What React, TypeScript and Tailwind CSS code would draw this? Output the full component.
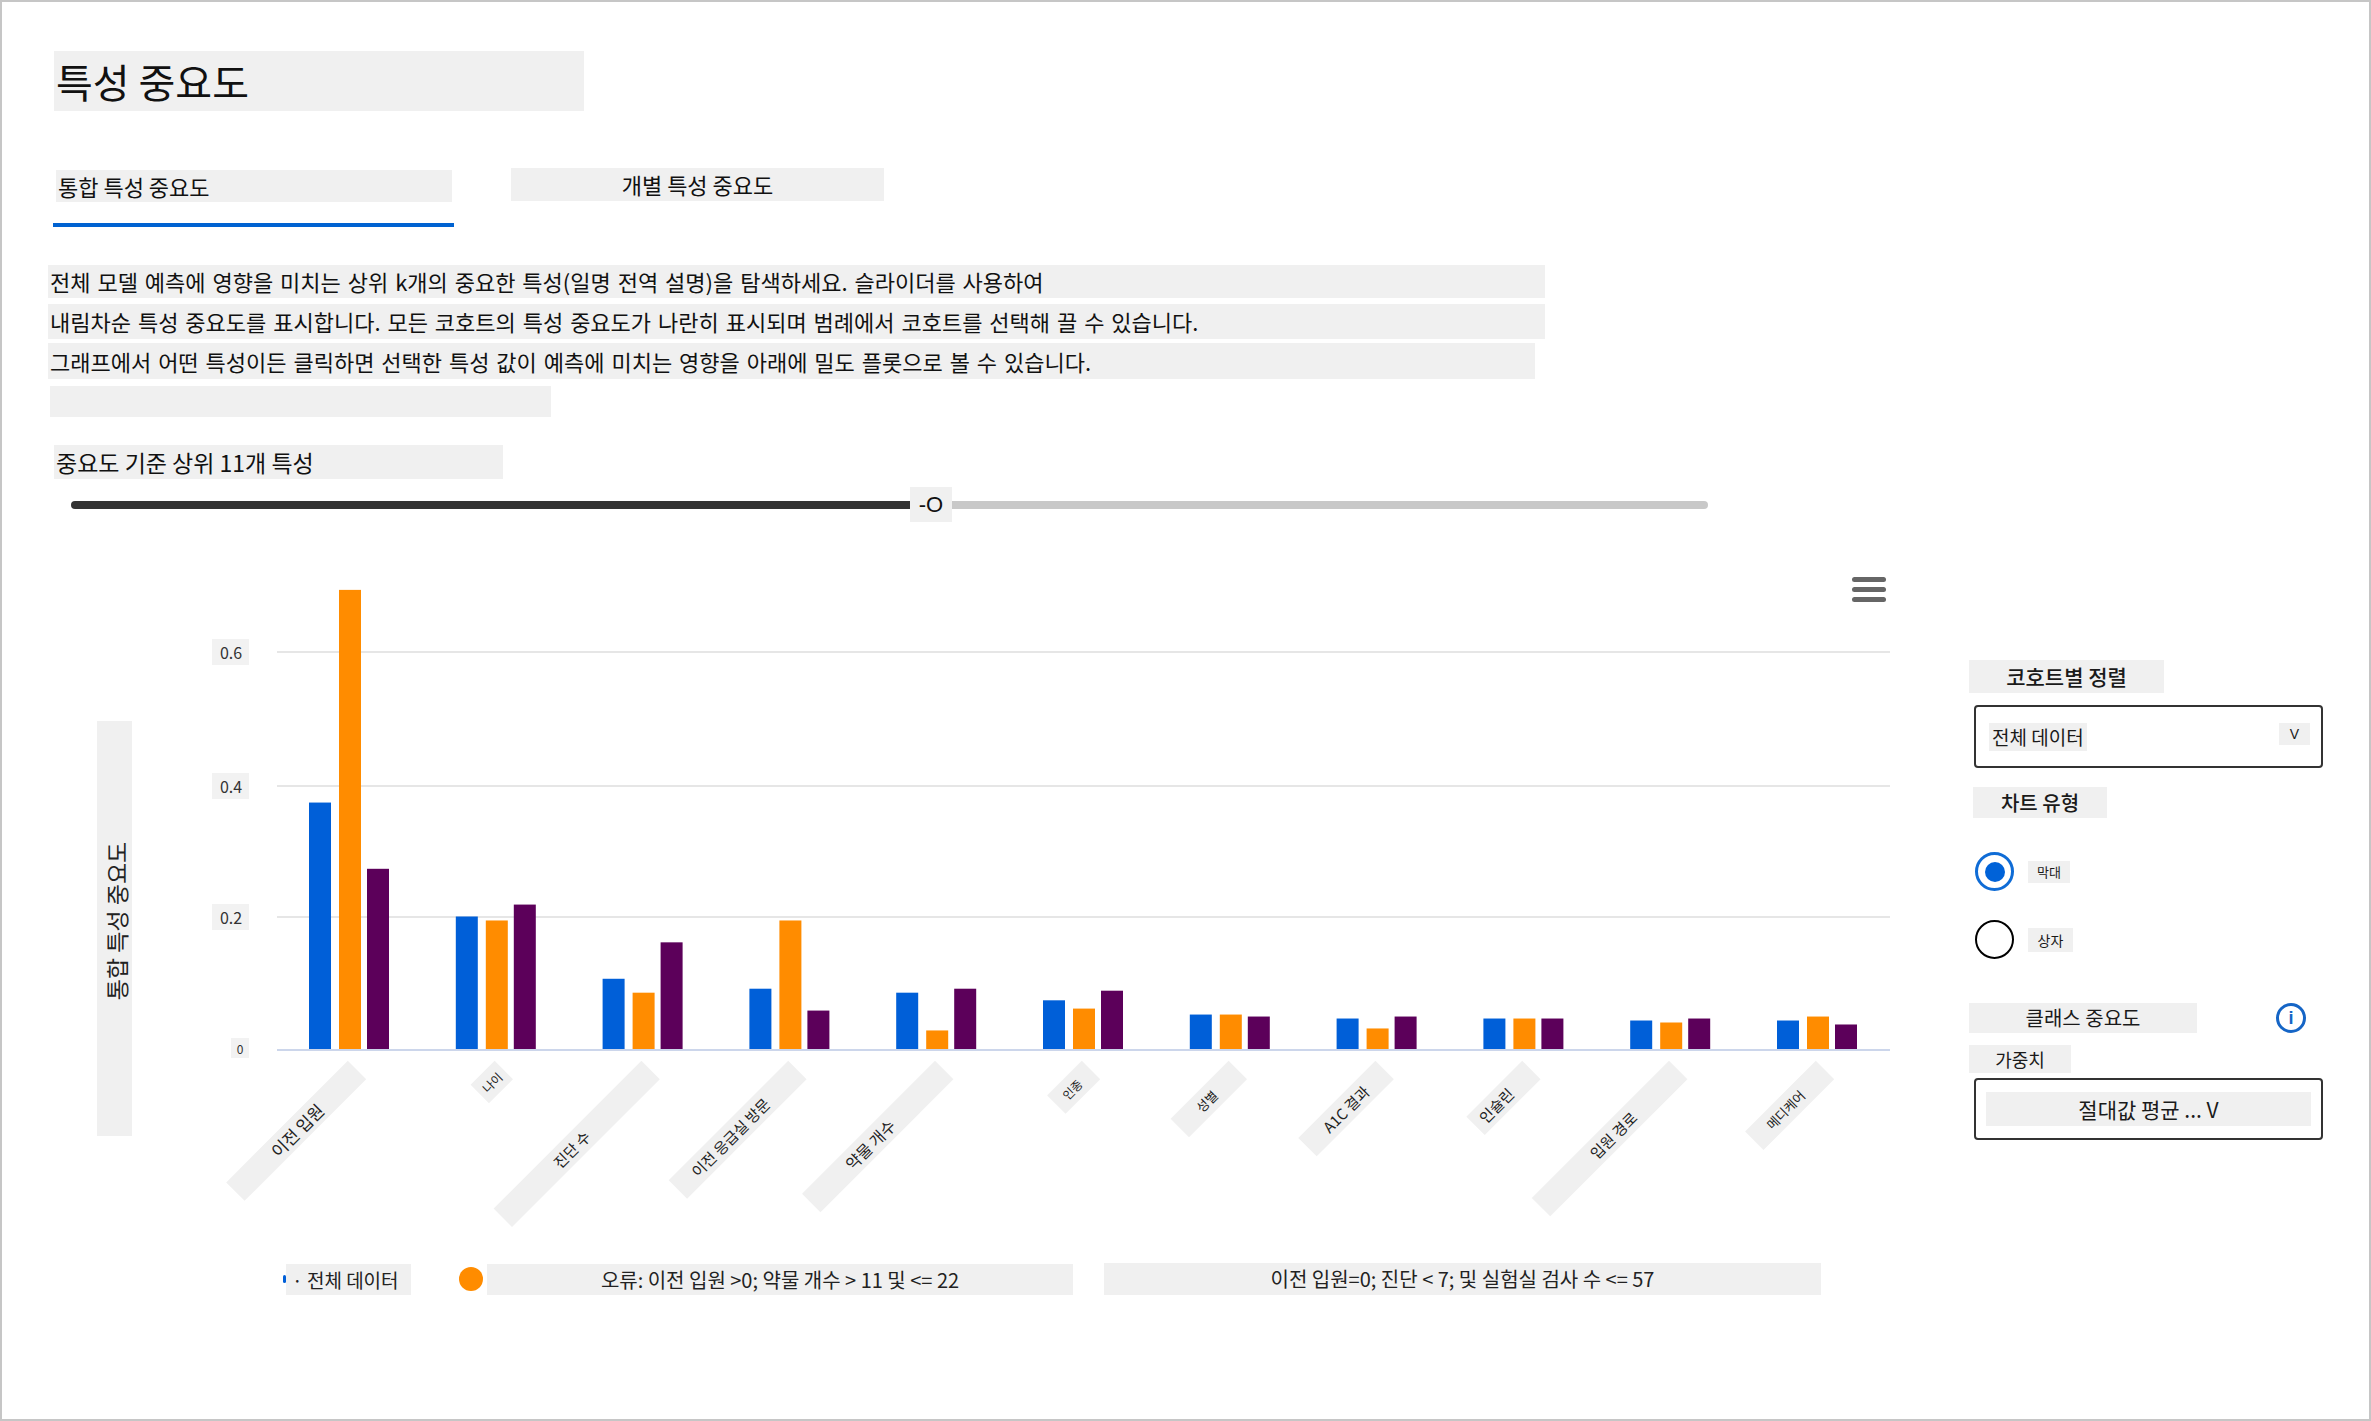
import React from 'react'

const GRAY = 'bg-[#f0f0f0]'

type Feature = {
  name: string
  values: [number, number, number]
  len: number
  textAt: number
  size: number
}

const features: Feature[] = [
  { name: '이전 입원', values: [0.372, 0.693, 0.272], len: 172, textAt: 85, size: 17 },
  { name: '나이', values: [0.2, 0.194, 0.218], len: 34, textAt: 17, size: 12 },
  { name: '진단 수', values: [0.106, 0.085, 0.161], len: 209, textAt: 112, size: 15 },
  { name: '이전 응급실 방문', values: [0.091, 0.194, 0.058], len: 169, textAt: 95, size: 15 },
  { name: '약물 개수', values: [0.085, 0.028, 0.091], len: 188, textAt: 105, size: 16 },
  { name: '인종', values: [0.0735, 0.061, 0.088], len: 49, textAt: 27, size: 12 },
  { name: '성별', values: [0.052, 0.052, 0.049], len: 82, textAt: 44, size: 13 },
  { name: 'A1C 결과', values: [0.046, 0.031, 0.049], len: 109, textAt: 55, size: 15 },
  { name: '인슐린', values: [0.046, 0.046, 0.046], len: 79, textAt: 50, size: 15 },
  { name: '입원 경로', values: [0.043, 0.04, 0.046], len: 194, textAt: 92, size: 15 },
  { name: '메디케어', values: [0.043, 0.049, 0.037], len: 100, textAt: 56, size: 13 },
]

const COLORS = ['#005fd8', '#ff8c00', '#5c005a']
const BASE_Y = 1049
const PER_UNIT = 662.5

const ticks = [
  { label: '0.6', y: 652 },
  { label: '0.4', y: 786 },
  { label: '0.2', y: 917 },
]

function FeatureChart() {
  return (
    <svg width={1921} height={741} viewBox="48 522 1921 741" className="block">
      {/* menu */}
      <rect x={1852} y={577} width={34} height={5} rx={2.5} fill="#666" />
      <rect x={1852} y={587} width={34} height={5} rx={2.5} fill="#666" />
      <rect x={1852} y={597} width={34} height={5} rx={2.5} fill="#666" />

      {/* y axis title */}
      <rect x={97} y={721} width={35} height={415} fill="#f0f0f0" />
      <text
        x={0}
        y={0}
        transform="translate(116 921) rotate(-90)"
        textAnchor="middle"
        dominantBaseline="central"
        fontSize={23}
        fill="#222"
      >
        통합 특성 중요도
      </text>

      {ticks.map((t) => (
        <g key={t.label}>
          <line x1={277} x2={1890} y1={t.y} y2={t.y} stroke="#e6e6e6" strokeWidth={2} />
          <rect x={212} y={t.y - 13} width={37} height={26} fill="#f2f2f2" />
          <text x={231} y={t.y} textAnchor="middle" dominantBaseline="central" fontSize={16} fill="#333">
            {t.label}
          </text>
        </g>
      ))}
      <rect x={231} y={1038} width={18} height={20} fill="#f2f2f2" />
      <text x={240} y={1048} textAnchor="middle" dominantBaseline="central" fontSize={12} fill="#333">
        0
      </text>

      {features.map((f, i) => {
        const cx = 349 + i * 146.8
        const offsets = [-40, -10, 18]
        return (
          <g key={f.name}>
            {f.values.map((v, j) => {
              const h = v * PER_UNIT
              return (
                <rect
                  key={j}
                  x={cx + offsets[j]}
                  y={BASE_Y - h}
                  width={22}
                  height={h}
                  fill={COLORS[j]}
                />
              )
            })}
            <g transform={`translate(${cx + 8} 1070) rotate(-45)`}>
              <rect x={-f.len} y={-13} width={f.len} height={26} fill="#f0f0f0" />
              <text
                x={-f.textAt}
                y={0}
                textAnchor="middle"
                dominantBaseline="central"
                fontSize={f.size}
                fill="#222"
              >
                {f.name}
              </text>
            </g>
          </g>
        )
      })}

      <line x1={277} x2={1890} y1={1050} y2={1050} stroke="#ccd6eb" strokeWidth={2} />
    </svg>
  )
}

function Legend() {
  return (
    <div className="flex h-[32px] items-center pl-[235px] text-[20px] text-[#222]">
      <div className="h-[8px] w-[3px] rounded-full bg-[#005fd8]" />
      <div className={`h-[31px] w-[125px] ${GRAY} pl-[6px] text-[19px] leading-[31px]`}>· 전체 데이터</div>
      <div className="ml-[48px] h-[24px] w-[24px] rounded-full bg-[#ff8c00]" />
      <div className={`ml-[4px] h-[31px] w-[586px] ${GRAY} text-center leading-[31px]`}>
        오류: 이전 입원 &gt;0; 약물 개수 &gt; 11 및 &lt;= 22
      </div>
      <div className={`ml-[31px] h-[32px] w-[717px] ${GRAY} text-center leading-[32px]`}>
        이전 입원=0; 진단 &lt; 7; 및 실험실 검사 수 &lt;= 57
      </div>
    </div>
  )
}

function SidePanel() {
  return (
    <div className="mt-[138px] flex w-[354px] flex-col items-start text-[#1a1a1a]">
      <div className={`h-[33px] w-[195px] ${GRAY} text-center text-[21px] font-medium leading-[33px]`}>
        코호트별 정렬
      </div>
      <div className="ml-[5px] mt-[12px] flex h-[63px] w-[349px] items-center justify-between rounded-[4px] border-2 border-[#333] pl-[13px] pr-[11px]">
        <div className={`h-[28px] ${GRAY} px-[3px] text-[19px] leading-[28px]`}>전체 데이터</div>
        <div className={`-mt-[6px] h-[22px] w-[31px] ${GRAY} text-center font-['Liberation_Sans'] text-[14px] leading-[22px]`}>
          V
        </div>
      </div>
      <div className={`ml-[4px] mt-[19px] h-[31px] w-[134px] ${GRAY} text-center text-[20px] font-medium leading-[31px]`}>
        차트 유형
      </div>
      <div className="ml-[6px] mt-[34px] flex items-center">
        <div className="flex h-[39px] w-[39px] items-center justify-center rounded-full border-[3px] border-[#0f6cd6]">
          <div className="h-[20px] w-[20px] rounded-full bg-[#0062d8]" />
        </div>
        <div className={`ml-[14px] h-[22px] w-[42px] ${GRAY} text-center text-[13px] leading-[22px]`}>막대</div>
      </div>
      <div className="ml-[6px] mt-[29px] flex items-center">
        <div className="h-[39px] w-[39px] rounded-full border-2 border-black" />
        <div className={`ml-[14px] h-[24px] w-[45px] ${GRAY} text-center text-[14px] leading-[24px]`}>상자</div>
      </div>
      <div className="mt-[44px] flex items-center">
        <div className={`h-[30px] w-[228px] ${GRAY} text-center text-[20px] leading-[30px]`}>클래스 중요도</div>
        <div className="ml-[79px] flex h-[30px] w-[30px] items-center justify-center rounded-full border-[3px] border-[#1565c6] font-['Liberation_Sans'] text-[18px] font-bold leading-none text-[#1565c6]">
          i
        </div>
      </div>
      <div className={`mt-[12px] h-[28px] w-[102px] ${GRAY} text-center text-[18px] leading-[28px]`}>가중치</div>
      <div className="ml-[5px] mt-[5px] flex h-[62px] w-[349px] items-center justify-center rounded-[4px] border-2 border-[#333]">
        <div className={`h-[34px] w-[325px] ${GRAY} text-center text-[21px] leading-[34px]`}>절대값 평균 ... V</div>
      </div>
    </div>
  )
}

export default function App() {
  return (
    <div className="h-[1421px] w-[2371px] overflow-hidden border-2 border-[#c6c6c6] bg-white font-['Noto_Sans_CJK_KR',sans-serif] text-[#111]">
      <div className="pl-[46px] pt-[49px]">
        <div className={`ml-[6px] h-[60px] w-[530px] ${GRAY} pl-[2px] text-[40px] leading-[60px]`}>특성 중요도</div>

        <div className="mt-[57px] flex items-start">
          <div className="ml-[5px] flex w-[401px] flex-col">
            <div className={`ml-[3px] mt-[2px] h-[32px] w-[396px] ${GRAY} pl-[2px] text-[22px] leading-[32px]`}>
              통합 특성 중요도
            </div>
            <div className="mt-[21px] h-[4px] w-[401px] bg-[#0062d1]" />
          </div>
          <div className={`ml-[57px] h-[33px] w-[373px] ${GRAY} text-center text-[22px] leading-[33px]`}>
            개별 특성 중요도
          </div>
        </div>

        <div className="mt-[38px] flex flex-col items-start text-[22px] [word-spacing:2px]">
          <div className={`h-[33px] w-[1497px] ${GRAY} pl-[2px] leading-[33px]`}>
            전체 모델 예측에 영향을 미치는 상위 k개의 중요한 특성(일명 전역 설명)을 탐색하세요. 슬라이더를 사용하여
          </div>
          <div className={`mt-[6px] h-[35px] w-[1497px] ${GRAY} pl-[2px] leading-[35px]`}>
            내림차순 특성 중요도를 표시합니다. 모든 코호트의 특성 중요도가 나란히 표시되며 범례에서 코호트를 선택해 끌 수 있습니다.
          </div>
          <div className={`mt-[4px] h-[36px] w-[1487px] ${GRAY} pl-[2px] leading-[36px]`}>
            그래프에서 어떤 특성이든 클릭하면 선택한 특성 값이 예측에 미치는 영향을 아래에 밀도 플롯으로 볼 수 있습니다.
          </div>
          <div className={`ml-[2px] mt-[7px] h-[31px] w-[501px] ${GRAY}`} />
        </div>

        <div className={`ml-[6px] mt-[28px] h-[34px] w-[449px] ${GRAY} pl-[2px] text-[23px] leading-[34px]`}>
          중요도 기준 상위 11개 특성
        </div>

        <div className="ml-[23px] mt-[8px] flex h-[35px] items-center">
          <div className="h-[8px] w-[839px] rounded-l-full bg-[#333]" />
          <div className={`flex h-[35px] w-[42px] items-center justify-center ${GRAY} font-['Liberation_Sans'] text-[22px]`}>
            -O
          </div>
          <div className="h-[8px] w-[756px] rounded-r-full bg-[#c8c8c8]" />
        </div>

        <div className="flex">
          <div className="flex w-[1921px] flex-col">
            <FeatureChart />
            <Legend />
          </div>
          <SidePanel />
        </div>
      </div>
    </div>
  )
}
